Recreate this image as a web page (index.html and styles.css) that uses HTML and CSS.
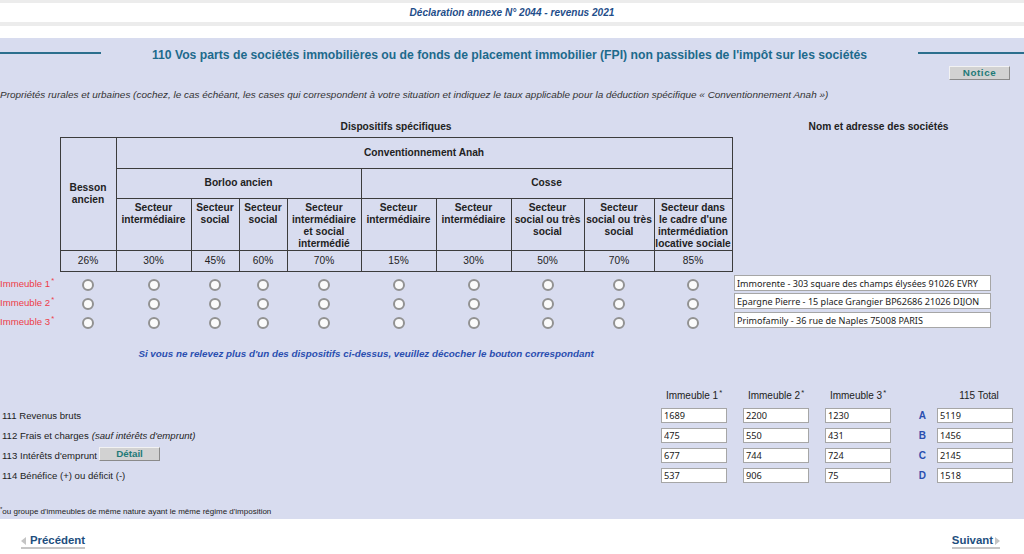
FILE: index.html
```html
<!DOCTYPE html>
<html lang="fr">
<head>
<meta charset="utf-8">
<title>Déclaration annexe N° 2044 - revenus 2021</title>
<link rel="stylesheet" href="styles.css">
</head>
<body>
<header class="doc-head">
  <div class="doc-head__bar"></div>
  <div class="doc-head__title">Déclaration annexe N° 2044 - revenus 2021</div>
  <div class="doc-head__bar doc-head__bar--thick"></div>
</header>

<main class="panel">
  <div class="section-title">
    <span class="section-title__rule section-title__rule--left"></span>
    <h1 class="section-title__text">110 Vos parts de sociétés immobilières ou de fonds de placement immobilier (FPI) non passibles de l'impôt sur les sociétés</h1>
    <span class="section-title__rule section-title__rule--right"></span>
  </div>
  <div class="notice-row"><button class="btn btn--notice" type="button">Notice</button></div>
  <p class="intro">Propriétés rurales et urbaines (cochez, le cas échéant, les cases qui correspondent à votre situation et indiquez le taux applicable pour la déduction spécifique « Conventionnement Anah »)</p>

  <table class="grid">
    <colgroup>
      <col class="c-label"><col class="c-56"><col class="c-75"><col class="c-48"><col class="c-48"><col class="c-74"><col class="c-75"><col class="c-75"><col class="c-73"><col class="c-70"><col class="c-78"><col class="c-addr">
    </colgroup>
    <tr class="r0">
      <td></td>
      <th colspan="10" class="caption">Dispositifs spécifiques</th>
      <th class="caption">Nom et adresse des sociétés</th>
    </tr>
    <tr class="r1">
      <td></td>
      <th rowspan="3" class="b mid">Besson<br>ancien</th>
      <th colspan="9" class="b">Conventionnement Anah</th>
      <td></td>
    </tr>
    <tr class="r2">
      <td></td>
      <th colspan="4" class="b">Borloo ancien</th>
      <th colspan="5" class="b">Cosse</th>
      <td></td>
    </tr>
    <tr class="r3">
      <td></td>
      <th class="b top">Secteur<br>intermédiaire</th>
      <th class="b top">Secteur<br>social</th>
      <th class="b top">Secteur<br>social</th>
      <th class="b top">Secteur<br>intermédiaire<br>et social<br>intermédié</th>
      <th class="b top">Secteur<br>intermédiaire</th>
      <th class="b top">Secteur<br>intermédiaire</th>
      <th class="b top">Secteur<br>social ou très<br>social</th>
      <th class="b top">Secteur<br>social ou très<br>social</th>
      <th class="b top">Secteur dans<br>le cadre d'une<br>intermédiation<br>locative sociale</th>
      <td></td>
    </tr>
    <tr class="r4">
      <td></td>
      <td class="b pct">26%</td><td class="b pct">30%</td><td class="b pct">45%</td><td class="b pct">60%</td><td class="b pct">70%</td>
      <td class="b pct">15%</td><td class="b pct">30%</td><td class="b pct">50%</td><td class="b pct">70%</td><td class="b pct">85%</td>
      <td></td>
    </tr>
    <tr class="rr rr--first">
      <td class="imm">Immeuble 1<sup>*</sup></td>
      <td><input class="radio" type="radio" name="d1"></td><td><input class="radio" type="radio" name="d1"></td><td><input class="radio" type="radio" name="d1"></td><td><input class="radio" type="radio" name="d1"></td><td><input class="radio" type="radio" name="d1"></td>
      <td><input class="radio" type="radio" name="d1"></td><td><input class="radio" type="radio" name="d1"></td><td><input class="radio" type="radio" name="d1"></td><td><input class="radio" type="radio" name="d1"></td><td><input class="radio" type="radio" name="d1"></td>
      <td class="addr"><input class="field field--addr" type="text" value="Immorente - 303 square des champs élysées 91026 EVRY"></td>
    </tr>
    <tr class="rr">
      <td class="imm">Immeuble 2<sup>*</sup></td>
      <td><input class="radio" type="radio" name="d2"></td><td><input class="radio" type="radio" name="d2"></td><td><input class="radio" type="radio" name="d2"></td><td><input class="radio" type="radio" name="d2"></td><td><input class="radio" type="radio" name="d2"></td>
      <td><input class="radio" type="radio" name="d2"></td><td><input class="radio" type="radio" name="d2"></td><td><input class="radio" type="radio" name="d2"></td><td><input class="radio" type="radio" name="d2"></td><td><input class="radio" type="radio" name="d2"></td>
      <td class="addr"><input class="field field--addr" type="text" value="Epargne Pierre - 15 place Grangier BP62686 21026 DIJON"></td>
    </tr>
    <tr class="rr">
      <td class="imm">Immeuble 3<sup>*</sup></td>
      <td><input class="radio" type="radio" name="d3"></td><td><input class="radio" type="radio" name="d3"></td><td><input class="radio" type="radio" name="d3"></td><td><input class="radio" type="radio" name="d3"></td><td><input class="radio" type="radio" name="d3"></td>
      <td><input class="radio" type="radio" name="d3"></td><td><input class="radio" type="radio" name="d3"></td><td><input class="radio" type="radio" name="d3"></td><td><input class="radio" type="radio" name="d3"></td><td><input class="radio" type="radio" name="d3"></td>
      <td class="addr"><input class="field field--addr" type="text" value="Primofamily - 36 rue de Naples 75008 PARIS"></td>
    </tr>
    <tr class="hint-row">
      <td colspan="11" class="hint">Si vous ne relevez plus d'un des dispositifs ci-dessus, veuillez décocher le bouton correspondant</td>
      <td></td>
    </tr>
  </table>

  <div class="amounts">
    <div class="amounts__head"></div>
    <div class="amounts__head">Immeuble 1<sup>*</sup></div>
    <div class="amounts__head">Immeuble 2<sup>*</sup></div>
    <div class="amounts__head">Immeuble 3<sup>*</sup></div>
    <div class="amounts__head"></div>
    <div class="amounts__head amounts__head--total">115 Total</div>

    <div class="amounts__label">111 Revenus bruts</div>
    <div class="amounts__cell"><input class="field" type="text" value="1689"></div>
    <div class="amounts__cell"><input class="field" type="text" value="2200"></div>
    <div class="amounts__cell"><input class="field" type="text" value="1230"></div>
    <div class="amounts__letter">A</div>
    <div class="amounts__cell"><input class="field field--total" type="text" value="5119"></div>

    <div class="amounts__label">112 Frais et charges <em>(sauf intérêts d'emprunt)</em></div>
    <div class="amounts__cell"><input class="field" type="text" value="475"></div>
    <div class="amounts__cell"><input class="field" type="text" value="550"></div>
    <div class="amounts__cell"><input class="field" type="text" value="431"></div>
    <div class="amounts__letter">B</div>
    <div class="amounts__cell"><input class="field field--total" type="text" value="1456"></div>

    <div class="amounts__label">113 Intérêts d'emprunt <button class="btn btn--detail" type="button">Détail</button></div>
    <div class="amounts__cell"><input class="field" type="text" value="677"></div>
    <div class="amounts__cell"><input class="field" type="text" value="744"></div>
    <div class="amounts__cell"><input class="field" type="text" value="724"></div>
    <div class="amounts__letter">C</div>
    <div class="amounts__cell"><input class="field field--total" type="text" value="2145"></div>

    <div class="amounts__label">114 Bénéfice (+) ou déficit (-)</div>
    <div class="amounts__cell"><input class="field" type="text" value="537"></div>
    <div class="amounts__cell"><input class="field" type="text" value="906"></div>
    <div class="amounts__cell"><input class="field" type="text" value="75"></div>
    <div class="amounts__letter">D</div>
    <div class="amounts__cell"><input class="field field--total" type="text" value="1518"></div>
  </div>

  <p class="footnote"><sup>*</sup>ou groupe d'immeubles de même nature ayant le même régime d'imposition</p>
</main>

<nav class="pager">
  <a class="pager__link" href="#"><span class="pager__arrow pager__arrow--prev"></span>Précédent</a>
  <a class="pager__link" href="#">Suivant<span class="pager__arrow pager__arrow--next"></span></a>
</nav>
</body>
</html>
```

FILE: styles.css
```css
* { box-sizing: border-box; }
html, body { margin: 0; padding: 0; }
body {
  width: 1024px;
  height: 554px;
  overflow: hidden;
  background: #ffffff;
  font-family: "Liberation Sans", Arial, sans-serif;
  color: #222;
}

/* ---------- top header ---------- */
.doc-head { padding-bottom: 12px; }
.doc-head__bar { height: 3px; background: #ececec; }
.doc-head__bar--thick { height: 4px; }
.doc-head__title {
  height: 19px;
  line-height: 19px;
  text-align: center;
  font-size: 10.1px;
  font-weight: bold;
  font-style: italic;
  color: #1f4e8a;
}

/* ---------- panel ---------- */
.panel {
  background: #d8dcef;
  height: 481px;
  padding-top: 8px;
  overflow: hidden;
}

.section-title {
  display: flex;
  align-items: flex-start;
  height: 18px;
}
.section-title__rule {
  height: 2px;
  margin-top: 6px;
  background: #2b6f8d;
}
.section-title__rule--left { width: 101px; }
.section-title__rule--right { width: 106px; }
.section-title__text {
  flex: 1;
  margin: 0;
  text-align: center;
  font-size: 12.2px;
  line-height: 18px;
  font-weight: bold;
  color: #1d6a8c;
}

.notice-row {
  display: flex;
  justify-content: flex-end;
  margin-top: 2px;
  padding-right: 14px;
  height: 14px;
}

.btn {
  font-family: "Liberation Sans", Arial, sans-serif;
  font-weight: bold;
  color: #1f7a78;
  background: #d2d2d2;
  border: 1px solid;
  border-color: #f2f2f2 #8a8a8a #8a8a8a #f2f2f2;
  padding: 0;
  line-height: 12px;
  cursor: pointer;
}
.btn--notice {
  width: 61px;
  height: 14px;
  font-size: 9.8px;
  letter-spacing: 0.6px;
}
.btn--detail {
  width: 61px;
  height: 14px;
  font-size: 9.8px;
  margin-left: 2px;
  vertical-align: middle;
  position: relative;
  top: -1px;
}

.intro {
  margin: 9px 0 0;
  line-height: 12px;
  font-size: 9.95px;
  font-style: italic;
  color: #333;
}

/* ---------- dispositifs table ---------- */
.grid {
  width: 1024px;
  table-layout: fixed;
  border-collapse: collapse;
  font-size: 10.2px;
}
.c-label { width: 60px; }
.c-56 { width: 56px; }
.c-75 { width: 75px; }
.c-48 { width: 48px; }
.c-74 { width: 74px; }
.c-73 { width: 73px; }
.c-70 { width: 70px; }
.c-78 { width: 78px; }
.c-addr { width: 293px; }

.grid th, .grid td { padding: 0; }
.grid th { font-weight: bold; color: #222; text-align: center; line-height: 12px; white-space: nowrap; }
.grid .b { border: 1px solid #3c3c3c; }
.grid .mid { vertical-align: middle; }
.grid .top { vertical-align: top; padding-top: 3px; }

.r0 { height: 36px; }
.r0 .caption { vertical-align: bottom; padding-bottom: 4px; }
.r1 { height: 31px; }
.r2 { height: 30px; }
.r3 { height: 51px; }
.r4 { height: 21px; }
.pct { text-align: center; font-weight: normal; color: #222; }

.rr { height: 19px; }
.rr td { text-align: center; vertical-align: middle; }
.rr--first { height: 22px; }
.rr--first td { padding-top: 3px; }
.rr .imm {
  text-align: left;
  color: #ee3b48;
  font-size: 9.6px;
  white-space: nowrap;
}
.imm sup, .amounts__head sup { font-size: 7.5px; vertical-align: 4px; line-height: 0; margin-left: 1px; }

.radio {
  -webkit-appearance: none;
  appearance: none;
  display: inline-block;
  width: 12px;
  height: 12px;
  margin: 3px 0 0;
  border: 2px solid #929292;
  border-radius: 50%;
  background: #fbfbfb;
  vertical-align: middle;
}

.rr .addr { text-align: left; padding-left: 2px; vertical-align: top; }
.rr--first .addr { padding-top: 4px; }

.field {
  width: 66px;
  height: 15px;
  padding: 0 2px;
  border: 1px solid #a6a6a6;
  background: #fff;
  font-family: "Noto Sans", "Open Sans", sans-serif;
  font-size: 9.2px;
  color: #1a1a1a;
  outline: none;
}
.field--addr { width: 257px; height: 16px; padding: 0 2px; font-size: 9.05px; }
.field--total { width: 76px; }

.hint-row { height: 35px; }
.hint {
  vertical-align: bottom;
  padding-bottom: 6px !important;
  text-align: center;
  font-size: 9.8px;
  line-height: 12px;
  font-weight: bold;
  font-style: italic;
  color: #2a4eaf;
}

/* ---------- amounts ---------- */
.amounts {
  margin-top: 24px;
  display: grid;
  grid-template-columns: 661px 82px 82px 66px 46px 76px;
  grid-auto-rows: 20px;
  grid-template-rows: 15px;
  font-size: 9.6px;
}
.amounts__head {
  width: 66px;
  text-align: center;
  line-height: 12px;
  font-size: 10px;
  color: #222;
}
.amounts__head:first-child { width: auto; }
.amounts__head--total { width: 76px; padding-left: 8px; }
.amounts__label {
  display: flex;
  align-items: center;
  color: #222;
  padding-left: 2px;
}
.amounts__label em { margin-left: 3px; }
.amounts__cell { display: flex; align-items: center; }
.amounts__letter {
  display: flex;
  align-items: center;
  justify-content: flex-end;
  padding-right: 11px;
  font-weight: bold;
  font-size: 10px;
  color: #2a4eaf;
}

.footnote {
  margin: 22px 0 0;
  font-size: 8px;
  line-height: 10px;
  color: #222;
}
.footnote sup { font-size: 6px; vertical-align: 3px; line-height: 0; }

/* ---------- pager ---------- */
.pager {
  height: 35px;
  display: flex;
  justify-content: space-between;
  align-items: flex-start;
  padding: 15px 24px 0 21px;
}
.pager__link {
  display: inline-flex;
  align-items: center;
  font-size: 11.4px;
  line-height: 13px;
  font-weight: bold;
  color: #1d4e7e;
  text-decoration: none;
  border-bottom: 2.5px solid #c6c6c6;
}
.pager__arrow {
  display: inline-block;
  width: 0;
  height: 0;
  border-top: 4px solid transparent;
  border-bottom: 4px solid transparent;
}
.pager__arrow--prev { border-right: 5px solid #c4c4c4; margin-right: 4px; }
.pager__arrow--next { border-left: 5px solid #c4c4c4; margin-left: 2px; }
```
